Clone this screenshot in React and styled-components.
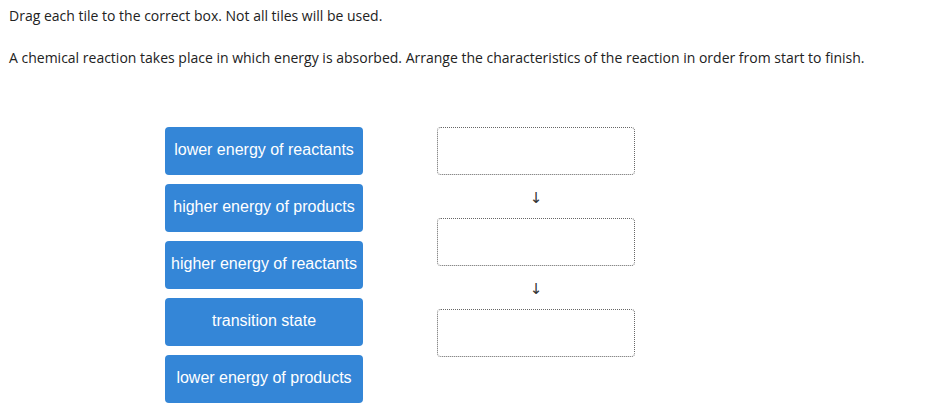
import styled, { createGlobalStyle } from "styled-components";

const GlobalStyle = createGlobalStyle`
  body {
    margin: 0;
    background: #fff;
    font-family: "Open Sans", "DejaVu Sans", sans-serif;
    color: #222;
  }
`;

const Page = styled.div`
  padding: 6px 9px 0;
`;

const Prompt = styled.p`
  margin: 0;
  font-size: 14px;
  line-height: 19px;
  margin-bottom: ${(p) => p.gap || 0}px;
`;

const Board = styled.div`
  display: flex;
  gap: 74px;
  margin-top: 60px;
  margin-left: 156px;
`;

const TileList = styled.div`
  display: flex;
  flex-direction: column;
  gap: 9px;
`;

const Tile = styled.div`
  width: 198px;
  height: 48px;
  box-sizing: border-box;
  display: flex;
  align-items: center;
  justify-content: center;
  background: #3486d7;
  border-radius: 4px;
  color: #fff;
  font-family: "Liberation Sans", Arial, sans-serif;
  font-size: 16px;
  white-space: nowrap;
  padding-bottom: 3px;
`;

const DropColumn = styled.div`
  display: flex;
  flex-direction: column;
  align-items: center;
`;

const DropBox = styled.div`
  width: 198px;
  height: 48px;
  box-sizing: border-box;
  border: 1px dotted #666;
  border-radius: 4px;
`;

const Arrow = styled.div`
  height: 43px;
  display: flex;
  align-items: center;
  justify-content: center;
  font-family: "DejaVu Sans", sans-serif;
  font-size: 15px;
  color: #333;
  padding-top: 3px;
  box-sizing: border-box;
`;

const tiles = [
  "lower energy of reactants",
  "higher energy of products",
  "higher energy of reactants",
  "transition state",
  "lower energy of products",
];

export default function App() {
  return (
    <Page>
      <GlobalStyle />
      <Prompt gap={23}>Drag each tile to the correct box. Not all tiles will be used.</Prompt>
      <Prompt>
        A chemical reaction takes place in which energy is absorbed. Arrange the
        characteristics of the reaction in order from start to finish.
      </Prompt>
      <Board>
        <TileList>
          {tiles.map((t) => (
            <Tile key={t}>{t}</Tile>
          ))}
        </TileList>
        <DropColumn>
          <DropBox />
          <Arrow>↓</Arrow>
          <DropBox />
          <Arrow>↓</Arrow>
          <DropBox />
        </DropColumn>
      </Board>
    </Page>
  );
}
